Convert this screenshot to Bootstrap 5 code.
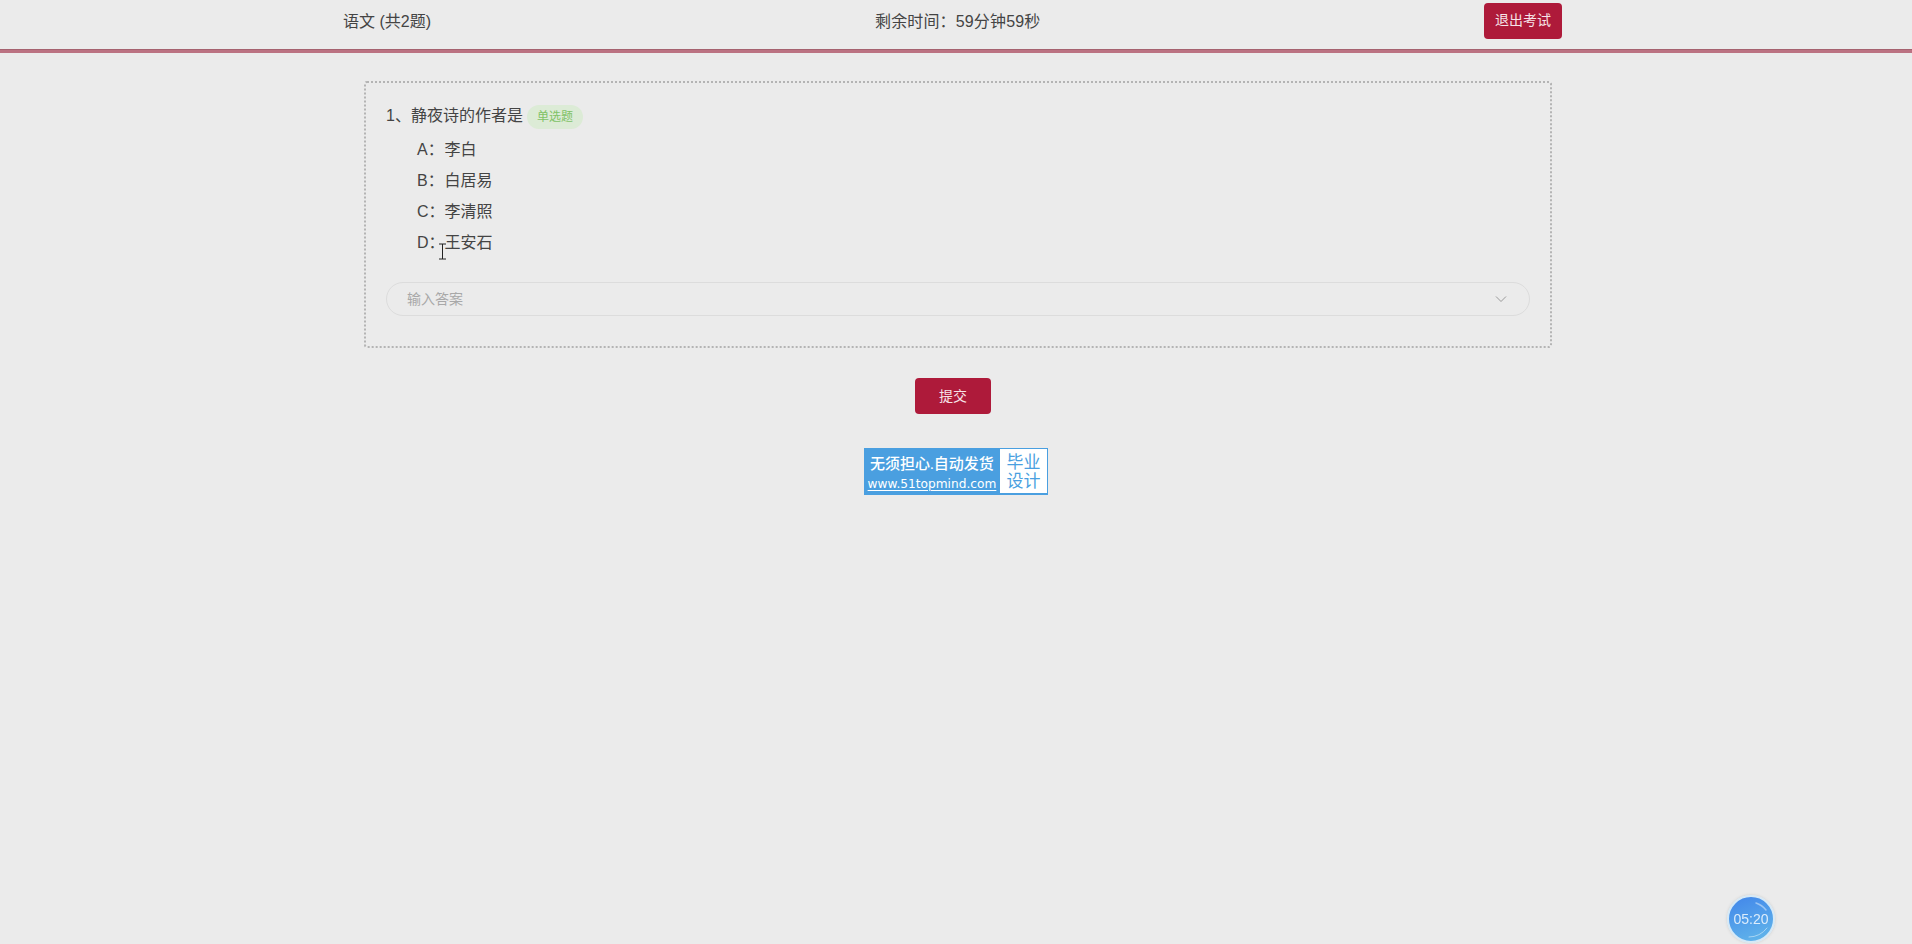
<!DOCTYPE html>
<html lang="zh">
<head>
    <meta charset="UTF-8">
    <meta name="viewport" content="width=device-width, initial-scale=1.0">
    <title>考试</title>
    <link href="https://cdn.jsdelivr.net/npm/bootstrap@5.3.0/dist/css/bootstrap.min.css" rel="stylesheet">
    <style>
        html, body { height: 100%; }
        body { background: #ebebeb; color: #444; font-family: "Liberation Sans", "Noto Sans CJK SC", sans-serif; font-size: 16px; overflow: hidden; }
        .exam-top { height: 53px; border-bottom: 3px solid #bb7282; box-shadow: inset 0 -1px 0 #a5626f; }
        .exam-top-inner { width: 1219px; height: 49px; margin-left: 343px; padding-bottom: 6px; }
        .exam-top-title { width: 532px; }
        .exam-top-time { width: 609px; letter-spacing: .15px; }
        .btn-exam { background: #ae1a3a; border: 0; border-radius: 4px; color: #f6e4e8; font-size: 14px; height: 36px; padding: 0; }
        .btn-exam:hover { background: #ae1a3a; color: #fff; }
        .btn-quit { width: 78px; margin-bottom: 2px; }
        .btn-submit { width: 76px; }
        .exam-box { width: 1188px; height: 267px; margin: 28px 0 0 364px; border: 2px dotted #b4b4b4; border-radius: 3px; padding: 18px 20px 0 20px; }
        .q-title { height: 30px; }
        .q-type { background: #dcebd6; color: #80c266; font-size: 12px; border-radius: 12px; width: 56px; height: 24px; margin: 2px 0 0 4px; }
        .q-options { margin: 3px 0 0 31px; line-height: 31px; height: 124px; }
        .q-options div { height: 31px; }
        .q-key { display: inline-block; width: 27.5px; }
        .answer-box { width: 1144px; height: 34px; border: 1px solid #dcdcdc; border-radius: 17px; padding: 0 22px 0 20px; margin-top: 24px; font-size: 14px; color: #a8a8a8; }
        .submit-row { margin-top: 30px; padding-left: 915px; }
        .ad-banner { width: 184px; height: 47px; margin: 34px 0 0 864px; background: #4a9fe0; color: #fff; padding: 1px 1px 2px 0; }
        .ad-left { width: 136px; padding-top: 4px; }
        .ad-line1 { font-family: "Liberation Serif", "Noto Sans CJK SC", serif; font-size: 15px; font-weight: 500; line-height: 22px; white-space: nowrap; }
        .ad-line2 { font-family: "DejaVu Sans", sans-serif; font-size: 12.2px; line-height: 18px; text-decoration: underline; text-underline-offset: 2px; white-space: nowrap; }
        .ad-right { width: 47px; background: #fff; color: #4a9fe0; font-size: 17px; line-height: 19px; padding-top: 4px; }
        .timer-ball { position: fixed; left: 1727px; top: 895px; width: 48px; height: 48px; border-radius: 50%; background: linear-gradient(160deg, #4286ea, #63b8ea); border: 2px solid #d6e9f6; color: #dcecfb; font-size: 14px; box-shadow: 0 0 3px #ccc; }
        .timer-shine { position: absolute; left: 0; top: 0; opacity: .6; }
        .mouse-cursor { position: absolute; left: 438px; top: 243px; }
    </style>
</head>
<body>
    <!-- Header -->
    <div class="exam-top">
        <div class="exam-top-inner d-flex align-items-center">
            <div class="exam-top-title">语文 (共2题)</div>
            <div class="exam-top-time">剩余时间：59分钟59秒</div>
            <button class="btn btn-exam btn-quit">退出考试</button>
        </div>
    </div>

    <!-- Question -->
    <div class="exam-box">
        <div class="q-title d-flex align-items-center">
            <span>1、静夜诗的作者是</span>
            <span class="q-type d-inline-flex align-items-center justify-content-center">单选题</span>
        </div>
        <div class="q-options">
            <div><span class="q-key">A：</span>李白</div>
            <div><span class="q-key">B：</span>白居易</div>
            <div><span class="q-key">C：</span>李清照</div>
            <div><span class="q-key">D：</span>王安石</div>
        </div>
        <div class="answer-box d-flex align-items-center justify-content-between">
            <span>输入答案</span>
            <svg width="12" height="8" viewBox="0 0 12 8"><path d="M1 1.5 6 6.5 11 1.5" fill="none" stroke="#999" stroke-width="1"/></svg>
        </div>
    </div>

    <div class="submit-row">
        <button class="btn btn-exam btn-submit">提交</button>
    </div>

    <!-- Banner -->
    <div class="ad-banner d-flex">
        <div class="ad-left text-center">
            <div class="ad-line1">无须担心.自动发货</div>
            <div class="ad-line2">www.51topmind.com</div>
        </div>
        <div class="ad-right text-center">毕业<br>设计</div>
    </div>

    <div class="timer-ball d-flex align-items-center justify-content-center">
        <svg class="timer-shine" width="44" height="44" viewBox="0 0 44 44"><path d="M27 6Q33 8 37 13" fill="none" stroke="#cfe4fb" stroke-width="1.5" stroke-linecap="round"/><path d="M20 40Q31 40 38 31" fill="none" stroke="#d8eefa" stroke-width="1" stroke-linecap="round"/></svg>
        05:20
    </div>

    <svg class="mouse-cursor" width="9" height="17" viewBox="0 0 9 17"><path d="M1 1H8M4.5 1V16M1 16H8" fill="none" stroke="#222" stroke-width="1"/></svg>
</body>
</html>
